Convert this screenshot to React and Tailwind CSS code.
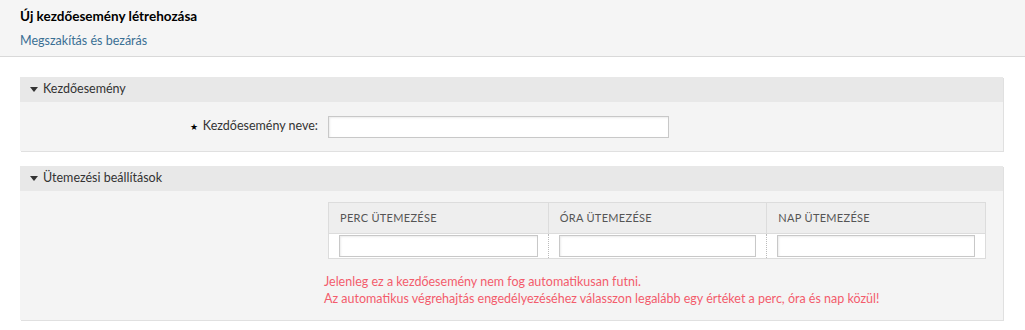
import React from 'react';

function Box({ title, children, bodyClass = '' }) {
  return (
    <section className="ml-5 mr-[22px] bg-[#f4f4f4] shadow-[1px_1px_0_#e0e0e0]">
      <h2 className="flex h-[25px] items-center gap-[5px] bg-[#e8e8e8] pl-[10px] text-[12.5px] font-normal text-[#333]">
        <svg width="8" height="6" viewBox="0 0 8 6" aria-hidden="true">
          <path d="M0 0h8L4 5z" fill="#333" />
        </svg>
        {title}
      </h2>
      <div className={bodyClass}>{children}</div>
    </section>
  );
}

const inputCls =
  'block h-[22px] w-full border border-[#c8c8c8] bg-white shadow-[inset_1px_1px_2px_rgba(0,0,0,0.08)] outline-none';

export default function App() {
  const cols = ['PERC ÜTEMEZÉSE', 'ÓRA ÜTEMEZÉSE', 'NAP ÜTEMEZÉSE'];
  return (
    <div className="h-[330px] w-[1025px] bg-white font-['Lato','Noto_Sans',sans-serif] text-[#333]">
      {/* Header */}
      <header className="h-[57px] border-b border-[#d9d9d9] bg-[#f5f5f5] px-5 pt-[8px]">
        <h1 className="text-[13.5px] font-bold leading-[17px] text-black">Új kezdőesemény létrehozása</h1>
        <a href="#" className="mt-[7px] block text-[12.5px] leading-[17px] text-[#3a6f94]">
          Megszakítás és bezárás
        </a>
      </header>

      <div className="flex flex-col gap-[15px] pt-5">
        <Box title="Kezdőesemény" bodyClass="h-[49px] flex items-center">
          <label className="flex w-[298px] items-center justify-end gap-[5px] text-[12.5px]">
            <span className="text-[9px] text-black">★</span>
            Kezdőesemény neve:
          </label>
          <input className={inputCls + ' ml-[10px] !w-[341px]'} />
        </Box>

        <Box title="Ütemezési beállítások" bodyClass="pt-[11px] pb-[13px] pl-[308px]">
          <div className="w-[658px] border border-[#dcdcdc]">
            <div className="grid grid-cols-3 bg-[#eee]">
              {cols.map((c, i) => (
                <div
                  key={c}
                  className={`flex h-[31px] items-center border-b border-[#dcdcdc] pl-[11px] text-[11px] tracking-[0.3px] text-[#555] ${i ? 'border-l' : ''}`}
                >
                  {c}
                </div>
              ))}
            </div>
            <div className="grid grid-cols-3 bg-white">
              {cols.map((c, i) => (
                <div
                  key={c}
                  className={`px-[10px] py-[1px] ${i ? 'border-l border-dotted border-[#bbb]' : ''}`}
                >
                  <input className={inputCls} />
                </div>
              ))}
            </div>
          </div>
          <p className="mt-[14px] -ml-[4px] text-[12.5px] leading-[17px] text-[#f35c6c]">
            Jelenleg ez a kezdőesemény nem fog automatikusan futni.
            <br />
            Az automatikus végrehajtás engedélyezéséhez válasszon legalább egy értéket a perc, óra és nap közül!
          </p>
        </Box>
      </div>
    </div>
  );
}
